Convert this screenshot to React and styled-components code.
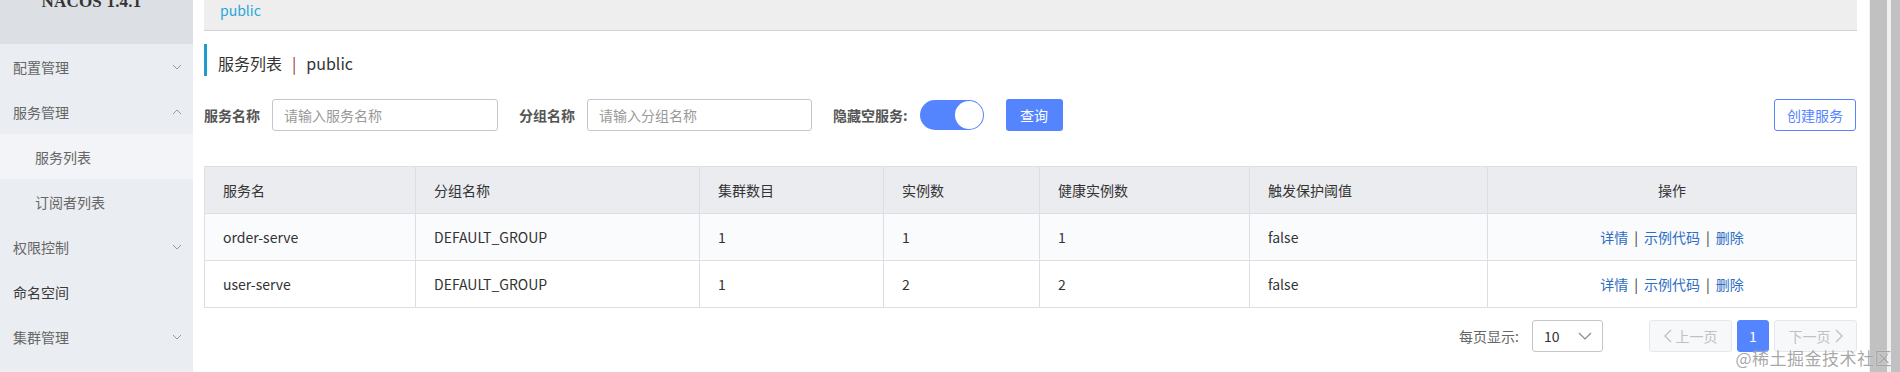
import React from "react";
import styled, { createGlobalStyle } from "styled-components";

const GlobalStyle = createGlobalStyle`
  html, body { margin: 0; padding: 0; }
  body {
    font-family: "Noto Sans CJK SC", "Noto Sans", sans-serif;
    font-size: 14px;
    color: #333;
    background: #fff;
    overflow: hidden;
  }
  * { box-sizing: border-box; }
`;

const Page = styled.div`
  position: relative;
  display: flex;
  width: 1900px;
  height: 372px;
  overflow: hidden;
`;

const Sidebar = styled.aside`
  width: 193px;
  flex: none;
  background: #eaedf1;
  display: flex;
  flex-direction: column;
`;

const LogoBar = styled.div`
  height: 44px;
  background: #dcdfe3;
  overflow: hidden;
  display: flex;
  justify-content: center;
  align-items: flex-start;
`;

const LogoText = styled.div`
  margin-top: -7px;
  margin-left: -10px;
  font-family: "Liberation Serif", serif;
  font-weight: 700;
  font-size: 17px;
  line-height: 17px;
  color: #333;
  letter-spacing: 0.2px;
`;

const MenuItem = styled.div`
  height: 45px;
  display: flex;
  align-items: center;
  justify-content: space-between;
  padding: ${(p) => (p.$sub ? "0 11px 0 35px" : "0 11px 0 13px")};
  color: ${(p) => (p.$strong ? "#3a3a3a" : "#666")};
  background: ${(p) => (p.$active ? "#f3f4f7" : "transparent")};
  font-size: 14px;
`;

const Main = styled.main`
  flex: 1;
  min-width: 0;
  padding: 0 13px 0 11px;
  display: flex;
  flex-direction: column;
`;

const Breadcrumb = styled.div`
  height: 31px;
  background: #eeeeee;
  border-bottom: 1px solid #d2d2d2;
  padding-left: 16px;
  margin-right: -1px;
`;

const Crumb = styled.span`
  display: inline-block;
  line-height: 20px;
  color: #2aa6d9;
  font-size: 14px;
`;

const PageTitle = styled.h1`
  margin: 13px 0 0;
  height: 32px;
  border-left: 3px solid #1f9bcd;
  padding: 7px 0 0 11px;
  font-size: 16px;
  font-weight: 400;
  line-height: 24px;
  color: #333;
`;

const TitleSep = styled.span`
  margin: 0 10px;
  color: #9a3436;
`;

const FilterBar = styled.div`
  margin-top: 23px;
  height: 32px;
  display: flex;
  align-items: center;
`;

const FieldLabel = styled.label`
  font-weight: 700;
  color: #555;
  font-size: 14px;
  margin: ${(p) => (p.$first ? "0 12px 0 0" : "0 12px 0 21px")};
  white-space: nowrap;
`;

const TextInput = styled.input`
  width: ${(p) => p.$w}px;
  height: 32px;
  border: 1px solid #c4c6cf;
  border-radius: 3px;
  padding: 0 11px;
  font-family: inherit;
  font-size: 14px;
  color: #333;
  outline: none;
  &::placeholder { color: #999; }
`;

const Switch = styled.div`
  width: 64px;
  height: 30px;
  border-radius: 15px;
  background: #5584ff;
  display: flex;
  align-items: center;
  justify-content: flex-end;
  padding: 1px;
`;

const Knob = styled.span`
  width: 28px;
  height: 28px;
  border-radius: 50%;
  background: #fff;
`;

const PrimaryButton = styled.button`
  margin-left: 22px;
  width: 57px;
  height: 32px;
  border: none;
  border-radius: 3px;
  background: #5584ff;
  color: #fff;
  font-family: inherit;
  font-size: 14px;
`;

const OutlineButton = styled.button`
  margin-left: auto;
  width: 82px;
  height: 32px;
  border: 1px solid #5584ff;
  border-radius: 3px;
  background: #fff;
  color: #5584ff;
  font-family: inherit;
  font-size: 14px;
`;

const Table = styled.table`
  margin-top: 35px;
  width: 1652px;
  border-collapse: collapse;
  table-layout: fixed;
  font-size: 14px;
`;

const Th = styled.th`
  height: 47px;
  background: #ebecf0;
  border: 1px solid #dcdee3;
  padding: 0 18px;
  font-weight: 400;
  color: #333;
  text-align: ${(p) => (p.$center ? "center" : "left")};
`;

const Tr = styled.tr`
  background: ${(p) => (p.$alt ? "#fafbfd" : "#fff")};
`;

const Td = styled.td`
  height: 47px;
  border: 1px solid #dcdee3;
  padding: 0 18px;
  color: #333;
  text-align: ${(p) => (p.$center ? "center" : "left")};
`;

const Link = styled.a`
  color: #2e6dc2;
  text-decoration: none;
`;

const LinkSep = styled.span`
  margin: 0 6px;
  color: #333;
`;

const Pagination = styled.div`
  margin-top: 12px;
  height: 32px;
  display: flex;
  align-items: center;
  justify-content: flex-end;
  margin-right: -1px;
`;

const PageSizeLabel = styled.span`
  color: #666;
  font-size: 14px;
  margin-right: 13px;
`;

const Select = styled.div`
  width: 71px;
  height: 32px;
  border: 1px solid #c4c6cf;
  border-radius: 3px;
  display: flex;
  align-items: center;
  justify-content: space-between;
  padding: 0 10px 0 11px;
  color: #333;
  font-size: 14px;
`;

const PageNav = styled.div`
  margin-left: 46px;
  display: flex;
  gap: 5px;
`;

const NavButton = styled.div`
  width: ${(p) => (p.$current ? 32 : 83)}px;
  height: 32px;
  border-radius: 3px;
  display: flex;
  align-items: center;
  justify-content: center;
  gap: 4px;
  font-size: 14px;
  background: ${(p) => (p.$current ? "#5584ff" : "#f7f8fa")};
  border: 1px solid ${(p) => (p.$current ? "#5584ff" : "#e6e7eb")};
  color: ${(p) => (p.$current ? "#fff" : "#c1c1c1")};
`;

const ScrollRail = styled.div`
  width: 31px;
  flex: none;
  display: flex;
`;

const RailPart = styled.div`
  width: ${(p) => p.$w}px;
  background: ${(p) => p.$c};
`;

const Watermark = styled.div`
  position: absolute;
  right: 8px;
  bottom: 3px;
  font-size: 17px;
  line-height: 22px;
  color: rgba(90, 90, 90, 0.55);
  text-shadow: 0 0 1px #fff;
  letter-spacing: 0.5px;
  pointer-events: none;
`;

const Chevron = ({ up, color = "#999" }) => (
  <svg width="10" height="6" viewBox="0 0 10 6" aria-hidden="true">
    <polyline
      points={up ? "1,5 5,1 9,5" : "1,1 5,5 9,1"}
      fill="none"
      stroke={color}
      strokeWidth="1"
    />
  </svg>
);

const SideArrow = ({ dir, color = "#c1c1c1" }) => (
  <svg width="8" height="14" viewBox="0 0 8 14" aria-hidden="true">
    <polyline
      points={dir === "left" ? "7,1 1,7 7,13" : "1,1 7,7 1,13"}
      fill="none"
      stroke={color}
      strokeWidth="1.4"
    />
  </svg>
);

const SelectChevron = () => (
  <svg width="14" height="8" viewBox="0 0 14 8" aria-hidden="true">
    <polyline points="1,1 7,7 13,1" fill="none" stroke="#888" strokeWidth="1.2" />
  </svg>
);

const menu = [
  { label: "配置管理", arrow: "down" },
  { label: "服务管理", arrow: "up" },
  { label: "服务列表", sub: true, active: true },
  { label: "订阅者列表", sub: true },
  { label: "权限控制", arrow: "down" },
  { label: "命名空间", strong: true },
  { label: "集群管理", arrow: "down" },
];

const columns = [
  { title: "服务名", width: 211 },
  { title: "分组名称", width: 284 },
  { title: "集群数目", width: 184 },
  { title: "实例数", width: 156 },
  { title: "健康实例数", width: 210 },
  { title: "触发保护阈值", width: 238 },
  { title: "操作", width: 369, center: true },
];

const rows = [
  ["order-serve", "DEFAULT_GROUP", "1", "1", "1", "false"],
  ["user-serve", "DEFAULT_GROUP", "1", "2", "2", "false"],
];

export default function App() {
  return (
    <>
      <GlobalStyle />
      <Page>
        <Sidebar>
          <LogoBar>
            <LogoText>NACOS 1.4.1</LogoText>
          </LogoBar>
          {menu.map((m) => (
            <MenuItem key={m.label} $sub={m.sub} $active={m.active} $strong={m.strong}>
              <span>{m.label}</span>
              {m.arrow && <Chevron up={m.arrow === "up"} />}
            </MenuItem>
          ))}
        </Sidebar>

        <Main>
          <Breadcrumb>
            <Crumb>public</Crumb>
          </Breadcrumb>

          <PageTitle>
            服务列表<TitleSep>|</TitleSep>public
          </PageTitle>

          <FilterBar>
            <FieldLabel $first>服务名称</FieldLabel>
            <TextInput $w={226} placeholder="请输入服务名称" />
            <FieldLabel>分组名称</FieldLabel>
            <TextInput $w={225} placeholder="请输入分组名称" />
            <FieldLabel>隐藏空服务:</FieldLabel>
            <Switch>
              <Knob />
            </Switch>
            <PrimaryButton>查询</PrimaryButton>
            <OutlineButton>创建服务</OutlineButton>
          </FilterBar>

          <Table>
            <colgroup>
              {columns.map((c) => (
                <col key={c.title} style={{ width: c.width }} />
              ))}
            </colgroup>
            <thead>
              <tr>
                {columns.map((c) => (
                  <Th key={c.title} $center={c.center}>
                    {c.title}
                  </Th>
                ))}
              </tr>
            </thead>
            <tbody>
              {rows.map((r, i) => (
                <Tr key={r[0]} $alt={i === 0}>
                  {r.map((v, j) => (
                    <Td key={j}>{v}</Td>
                  ))}
                  <Td $center>
                    <Link>详情</Link>
                    <LinkSep>|</LinkSep>
                    <Link>示例代码</Link>
                    <LinkSep>|</LinkSep>
                    <Link>删除</Link>
                  </Td>
                </Tr>
              ))}
            </tbody>
          </Table>

          <Pagination>
            <PageSizeLabel>每页显示:</PageSizeLabel>
            <Select>
              <span>10</span>
              <SelectChevron />
            </Select>
            <PageNav>
              <NavButton>
                <SideArrow dir="left" />
                <span>上一页</span>
              </NavButton>
              <NavButton $current>1</NavButton>
              <NavButton>
                <span>下一页</span>
                <SideArrow dir="right" />
              </NavButton>
            </PageNav>
          </Pagination>
        </Main>

        <ScrollRail>
          <RailPart $w={1} $c="#f1f1f1" />
          <RailPart $w={17} $c="#c1c1c1" />
          <RailPart $w={4} $c="#f1f1f1" />
          <RailPart $w={9} $c="#c1c1c1" />
        </ScrollRail>

        <Watermark>@稀土掘金技术社区</Watermark>
      </Page>
    </>
  );
}
